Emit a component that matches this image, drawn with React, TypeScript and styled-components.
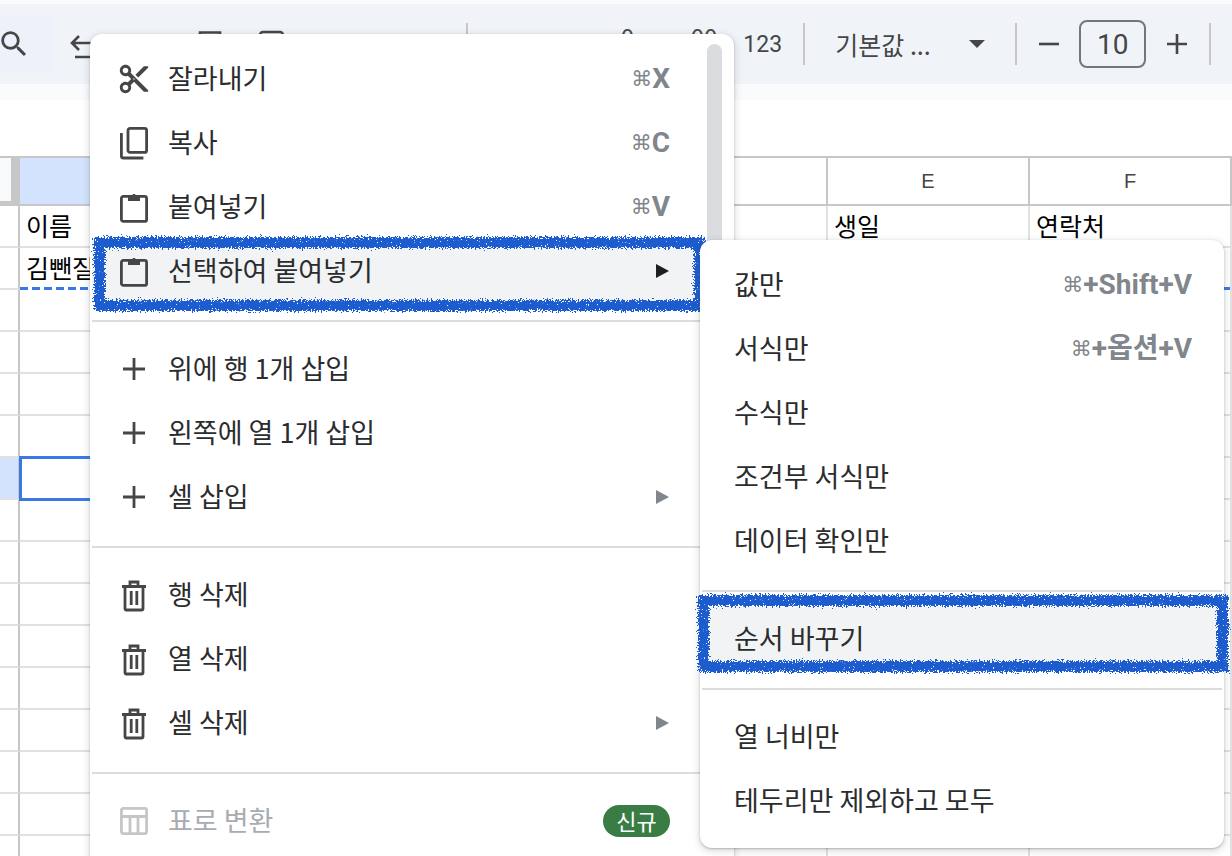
import { createGlobalStyle, styled } from "styled-components";
import { MdContentCut, MdSearch } from "react-icons/md";

const GlobalStyle = createGlobalStyle`
  html, body { margin: 0; padding: 0; background: #fff; }
  * { box-sizing: border-box; }
  body { font-family: "Noto Sans CJK KR", "Noto Sans", sans-serif; }
`;

const Page = styled.div`
  position: relative;
  width: 1232px;
  height: 856px;
  overflow: hidden;
  background: #fff;
  font-family: "Noto Sans CJK KR", "Noto Sans", sans-serif;
`;

const TopStrip = styled.div`
  height: 4px;
  background: #f9fbfd;
`;

const Toolbar = styled.div`
  height: 80px;
  background: #f0f4f9;
  display: flex;
  align-items: center;
  color: #444746;
`;

const SearchSlot = styled.div`
  width: 52px;
  height: 56px;
  background: #edf2fa;
  display: flex;
  align-items: center;
  margin-top: -1px;
  margin-right: 12px;
  svg { margin-left: -3px; }
`;

const ToolIcon = styled.svg<{ $gap: number }>`
  width: 40px;
  height: 40px;
  flex: none;
  fill: none;
  stroke: #444746;
  stroke-width: 2.6;
  margin-right: ${(p) => p.$gap}px;
`;

const ToolDecimal = styled.span<{ $gap: number }>`
  font-size: 24px;
  margin-right: ${(p) => p.$gap}px;
  margin-top: -18px;
`;

const ToolText = styled.span`
  font-family: Roboto, "Noto Sans", sans-serif;
  font-size: 23px;
  width: 38px;
  margin-left: 1px;
`;

const ToolDivider = styled.div<{ $left: number; $right: number }>`
  width: 2px;
  height: 42px;
  background: #c7c7c7;
  margin: 0 ${(p) => p.$right}px 0 ${(p) => p.$left}px;
`;

const FontName = styled.span`
  font-size: 25px;
  width: 134px;
`;

const Caret = styled.div`
  width: 0;
  height: 0;
  border-left: 8px solid transparent;
  border-right: 8px solid transparent;
  border-top: 8px solid #444746;
  margin-right: 30px;
`;

const SizeSign = styled.svg`
  width: 24px;
  height: 24px;
  flex: none;
`;

const SizeBox = styled.div`
  width: 67px;
  height: 48px;
  margin: 0 19px 0 18px;
  border: 2px solid #747775;
  border-radius: 8px;
  display: flex;
  align-items: center;
  justify-content: center;
  font-family: Roboto, "Noto Sans", sans-serif;
  font-size: 28px;
  color: #444746;
`;

const SubBar = styled.div`
  height: 16px;
  background: #f9fbfd;
`;

const FormulaBar = styled.div`
  height: 57px;
  background: #fff;
`;

const SheetGrid = styled.div`
  display: grid;
  grid-template-columns: 20px repeat(6, 202px);
  grid-template-rows: 48px repeat(16, 42px);
  border-top: 2px solid #c7c7c7;
  margin-top: -1px;
`;

const Corner = styled.div`
  background: #f8f9fa;
  border-right: 9px solid #c7c7c7;
  border-bottom: 5px solid #c7c7c7;
`;

const ColHead = styled.div<{ $active?: boolean }>`
  background: ${(p) => (p.$active ? "#d3e3fd" : "#fff")};
  border-right: 2px solid #c7c7c7;
  border-bottom: 2px solid #c7c7c7;
  display: flex;
  align-items: center;
  justify-content: center;
  font-family: "Liberation Sans", Arial, sans-serif;
  font-size: 20px;
  color: #444746;
`;

const RowHead = styled.div<{ $active?: boolean }>`
  background: ${(p) => (p.$active ? "#d3e3fd" : "#fff")};
  border-right: 2px solid #c7c7c7;
  border-bottom: 2px solid #e1e1e1;
`;

const Cell = styled.div<{ $selected?: boolean; $copied?: boolean }>`
  position: relative;
  border-right: 2px solid #e1e1e1;
  border-bottom: 2px solid #e1e1e1;
  padding-left: 6px;
  font-size: 25px;
  line-height: 38px;
  color: #000;
  white-space: nowrap;
  overflow: hidden;
  ${(p) =>
    p.$copied
      ? `border-bottom: none;
         background: repeating-linear-gradient(90deg, #3b78e7 0 8px, transparent 8px 12px) bottom / 100% 3px no-repeat;`
      : ""}
  ${(p) => (p.$selected ? "outline: 3px solid #3b78e7; outline-offset: -2px; margin-top: -1px;" : "")}
`;

const Menu = styled.div<{ $left: number; $top: number; $width: number; $height: number }>`
  position: absolute;
  left: ${(p) => p.$left}px;
  top: ${(p) => p.$top}px;
  width: ${(p) => p.$width}px;
  height: ${(p) => p.$height}px;
  background: #fff;
  border-radius: 12px;
  box-shadow: 0 2px 6px 2px rgba(60, 64, 67, 0.15), 0 1px 2px rgba(60, 64, 67, 0.3);
  padding-top: 13px;
`;

const Thumb = styled.div`
  position: absolute;
  right: 12px;
  top: 10px;
  width: 15px;
  height: 300px;
  background: #dadce0;
  border-radius: 8px;
`;

const Item = styled.div<{ $active?: boolean; $width: number; $pad: number; $end: number }>`
  position: relative;
  display: flex;
  align-items: center;
  height: 64px;
  width: ${(p) => p.$width}px;
  margin-left: 2px;
  padding: 0 ${(p) => p.$end}px 0 ${(p) => p.$pad}px;
  background: ${(p) => (p.$active ? "#f1f3f4" : "transparent")};
`;

const IconSlot = styled.div<{ $muted?: boolean }>`
  width: 28px;
  height: 28px;
  margin-right: 20px;
  flex: none;
  display: flex;
  color: ${(p) => (p.$muted ? "#c4c7c5" : "#444746")};
  svg { width: 100%; height: 100%; display: block; overflow: visible; }
`;

const CutSlot = styled(IconSlot)`
  svg { width: 34px; height: 34px; margin: -3px; flex: none; }
`;

const Label = styled.span<{ $muted?: boolean }>`
  flex: 1;
  font-size: 27px;
  line-height: 32px;
  margin-top: -2px;
  color: ${(p) => (p.$muted ? "#a8abb0" : "#2b2c2e")};
  white-space: nowrap;
`;

const Shortcut = styled.span`
  font-family: Roboto, "Noto Sans CJK KR", sans-serif;
  font-weight: 700;
  font-size: 28px;
  line-height: 32px;
  height: 32px;
  color: #80868b;
  white-space: nowrap;
`;

const CmdMark = styled.span`
  font-family: "DejaVu Sans", sans-serif;
  font-weight: 400;
  font-size: 21px;
  position: relative;
  top: -2px;
`;

const Arrow = styled.div<{ $dark?: boolean }>`
  width: 0;
  height: 0;
  border-top: 7px solid transparent;
  border-bottom: 7px solid transparent;
  border-left: 13px solid ${(p) => (p.$dark ? "#1f1f1f" : "#80868b")};
  margin-right: 1px;
`;

const NewBadge = styled.span`
  background: #3a7d44;
  color: #fff;
  font-size: 22px;
  line-height: 30px;
  height: 32px;
  width: 67px;
  border-radius: 16px;
  text-align: center;
`;

const Divider = styled.div<{ $width: number }>`
  height: 2px;
  background: #dadce0;
  width: ${(p) => p.$width}px;
  margin: 17px 0 15px 2px;
`;

const RoughFrame = styled.div<{ $inset: string }>`
  position: absolute;
  inset: ${(p) => p.$inset};
  border: 11px solid #1f5bcf;
  pointer-events: none;
  filter: url(#rough);
`;

const FilterDefs = styled.svg`
  position: absolute;
  width: 0;
  height: 0;
`;

const PasteIcon = () => (
  <svg viewBox="0 0 28 28" fill="none">
    <rect x="1.4" y="3.4" width="25.2" height="25" rx="2" stroke="currentColor" strokeWidth="2.8" />
    <path d="M8 3h4c.4-2.6 3.6-2.6 4 0h4v5H8z" fill="currentColor" />
  </svg>
);

const CopyIcon = () => (
  <svg viewBox="0 0 28 28" fill="none" stroke="currentColor" strokeWidth="2.8">
    <rect x="8" y="-0.6" width="18.6" height="24" rx="2" />
    <path d="M1.4 4v23a2 2 0 0 0 2 2h20" />
  </svg>
);

const PlusIcon = () => (
  <svg viewBox="0 0 28 28" fill="none" stroke="currentColor" strokeWidth="2.8">
    <path d="M14 3v22M3 14h22" />
  </svg>
);

const TrashIcon = () => (
  <svg viewBox="0 0 28 28" fill="none" stroke="currentColor" strokeWidth="2.8">
    <path d="M2 5.5h24M10 5.5V1h8v4.5" />
    <path d="M5 5.5v22a1.5 1.5 0 0 0 1.5 1.5h15a1.5 1.5 0 0 0 1.5-1.5v-22" />
    <path d="M11.2 10v14M16.8 10v14" />
  </svg>
);

const TableIcon = () => (
  <svg viewBox="0 0 28 28" fill="none" stroke="currentColor" strokeWidth="2.8">
    <rect x="1.4" y="1.4" width="25.2" height="25.2" rx="2" />
    <path d="M1.4 9.5h25M10 9.5v17M18 9.5v17" />
  </svg>
);

const Cmd = ({ text }: { text: string }) => (
  <Shortcut>
    <CmdMark>⌘</CmdMark>
    {text}
  </Shortcut>
);

const COLS = ["", "", "", "", "E", "F"];
const ROW_COUNT = 16;

const cellText = (row: number, col: number) => {
  if (row === 0) return ["이름", "", "", "", "생일", "연락처"][col];
  if (row === 1 && col === 0) return "김뺀질";
  return "";
};

const MAIN = { $width: 604, $pad: 28, $end: 26 };
const SUB = { $width: 520, $pad: 32, $end: 30 };

export default function App() {
  return (
    <Page>
      <GlobalStyle />
      <FilterDefs aria-hidden="true">
        <filter id="rough" x="-5%" y="-20%" width="110%" height="140%">
          <feTurbulence type="fractalNoise" baseFrequency="0.7" numOctaves="3" seed="4" result="wobble" />
          <feDisplacementMap in="SourceGraphic" in2="wobble" scale="9" result="moved" />
          <feTurbulence type="fractalNoise" baseFrequency="0.9" numOctaves="2" seed="9" />
          <feColorMatrix type="matrix" values="0 0 0 0 0  0 0 0 0 0  0 0 0 0 0  0 0 0 -12 9.5" result="specks" />
          <feComposite in="moved" in2="specks" operator="in" />
        </filter>
      </FilterDefs>

      <TopStrip />
      <Toolbar>
        <SearchSlot>
          <MdSearch size={34} />
        </SearchSlot>
        <ToolIcon $gap={86} viewBox="0 0 40 40">
          <path d="M15 12 8 19l7 7M8 19h18a7 7 0 0 1 0 14H11" />
        </ToolIcon>
        <ToolIcon $gap={24} viewBox="0 0 40 40">
          <path d="M10 16V8.5h20V16M6 16h28v14H6z" />
        </ToolIcon>
        <ToolIcon $gap={172} viewBox="0 0 40 40">
          <rect x="6" y="8" width="23" height="12" rx="3" />
        </ToolIcon>
        <ToolDivider $left={0} $right={146} />
        <ToolDecimal $gap={50}>.0</ToolDecimal>
        <ToolDecimal $gap={25}>.00</ToolDecimal>
        <ToolText>123</ToolText>
        <ToolDivider $left={22} $right={30} />
        <FontName>기본값 ...</FontName>
        <Caret />
        <ToolDivider $left={0} $right={20} />
        <SizeSign viewBox="0 0 24 24" stroke="#444746" strokeWidth="2.6">
          <path d="M2 12h20" />
        </SizeSign>
        <SizeBox>10</SizeBox>
        <SizeSign viewBox="0 0 24 24" stroke="#444746" strokeWidth="2.6">
          <path d="M2 12h20M12 2v20" />
        </SizeSign>
        <ToolDivider $left={20} $right={0} />
      </Toolbar>
      <SubBar />
      <FormulaBar />

      <SheetGrid>
        <Corner />
        {COLS.map((c, i) => (
          <ColHead key={i} $active={i === 0}>
            {c}
          </ColHead>
        ))}
        {Array.from({ length: ROW_COUNT }).flatMap((_, r) => [
          <RowHead key={`h${r}`} $active={r === 6} />,
          ...COLS.map((_c, c) => (
            <Cell key={`${r}-${c}`} $copied={r === 1} $selected={r === 6 && c === 0}>
              {cellText(r, c)}
            </Cell>
          )),
        ])}
      </SheetGrid>

      <Menu $left={90} $top={34} $width={644} $height={900}>
        <Thumb />
        <Item {...MAIN}>
          <CutSlot><MdContentCut /></CutSlot>
          <Label>잘라내기</Label>
          <Cmd text="X" />
        </Item>
        <Item {...MAIN}>
          <IconSlot><CopyIcon /></IconSlot>
          <Label>복사</Label>
          <Cmd text="C" />
        </Item>
        <Item {...MAIN}>
          <IconSlot><PasteIcon /></IconSlot>
          <Label>붙여넣기</Label>
          <Cmd text="V" />
        </Item>
        <Item {...MAIN} $active>
          <IconSlot><PasteIcon /></IconSlot>
          <Label>선택하여 붙여넣기</Label>
          <Arrow $dark />
          <RoughFrame $inset="-2px -9px -8px 2px" />
        </Item>
        <Divider $width={640} />
        <Item {...MAIN}>
          <IconSlot><PlusIcon /></IconSlot>
          <Label>위에 행 1개 삽입</Label>
        </Item>
        <Item {...MAIN}>
          <IconSlot><PlusIcon /></IconSlot>
          <Label>왼쪽에 열 1개 삽입</Label>
        </Item>
        <Item {...MAIN}>
          <IconSlot><PlusIcon /></IconSlot>
          <Label>셀 삽입</Label>
          <Arrow />
        </Item>
        <Divider $width={640} />
        <Item {...MAIN}>
          <IconSlot><TrashIcon /></IconSlot>
          <Label>행 삭제</Label>
        </Item>
        <Item {...MAIN}>
          <IconSlot><TrashIcon /></IconSlot>
          <Label>열 삭제</Label>
        </Item>
        <Item {...MAIN}>
          <IconSlot><TrashIcon /></IconSlot>
          <Label>셀 삭제</Label>
          <Arrow />
        </Item>
        <Divider $width={640} />
        <Item {...MAIN}>
          <IconSlot $muted><TableIcon /></IconSlot>
          <Label $muted>표로 변환</Label>
          <NewBadge>신규</NewBadge>
        </Item>
      </Menu>

      <Menu $left={700} $top={240} $width={524} $height={608}>
        <Item {...SUB}>
          <Label>값만</Label>
          <Cmd text="+Shift+V" />
        </Item>
        <Item {...SUB}>
          <Label>서식만</Label>
          <Cmd text="+옵션+V" />
        </Item>
        <Item {...SUB}>
          <Label>수식만</Label>
        </Item>
        <Item {...SUB}>
          <Label>조건부 서식만</Label>
        </Item>
        <Item {...SUB}>
          <Label>데이터 확인만</Label>
        </Item>
        <Divider $width={520} />
        <Item {...SUB} $active>
          <Label>순서 바꾸기</Label>
          <RoughFrame $inset="-12px -6px -1px -4px" />
        </Item>
        <Divider $width={520} />
        <Item {...SUB}>
          <Label>열 너비만</Label>
        </Item>
        <Item {...SUB}>
          <Label>테두리만 제외하고 모두</Label>
        </Item>
      </Menu>
    </Page>
  );
}
